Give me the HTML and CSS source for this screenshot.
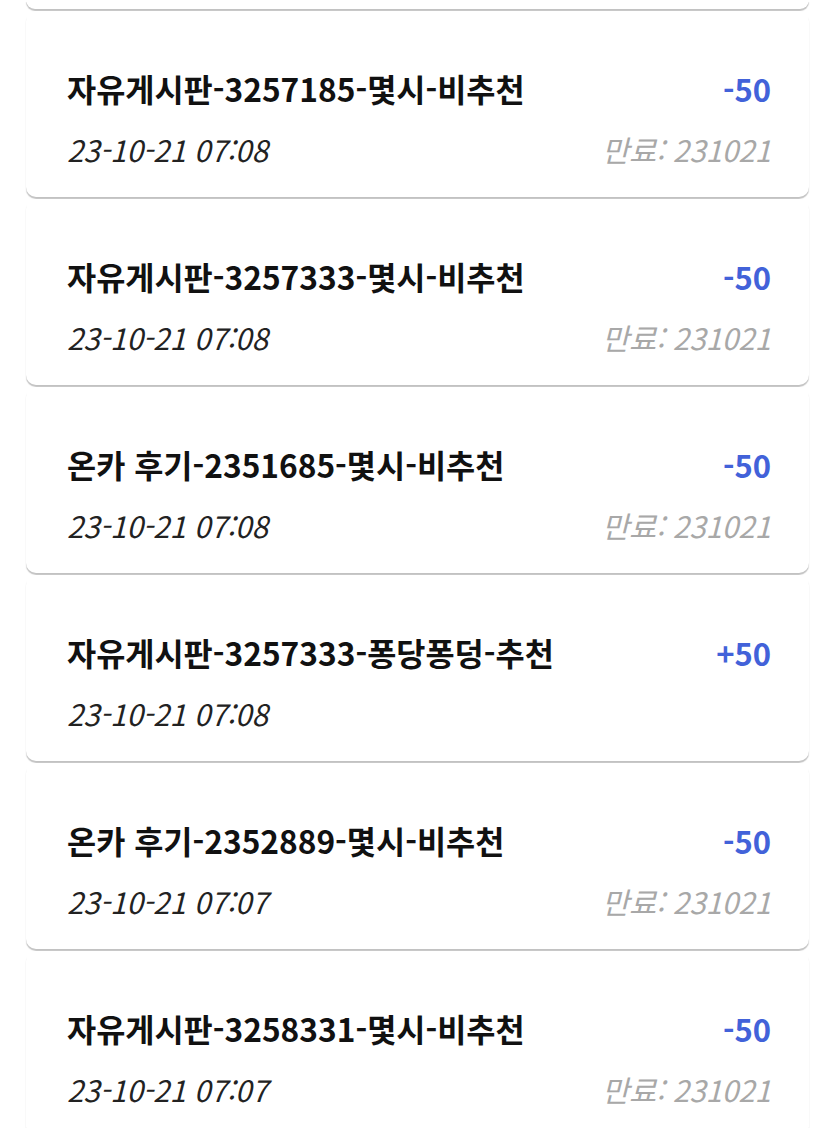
FILE: index.html
```html
<!DOCTYPE html>
<html lang="ko">
<head>
    <meta charset="UTF-8">
    <meta name="viewport" content="width=device-width, initial-scale=1.0">
    <title>포인트 내역</title>
    <link rel="stylesheet" href="styles.css">
</head>
<body>
<div class="list">
    <div class="card cut"></div>

    <div class="card">
        <div class="row">
            <span class="title">자유게시판-3257185-몇시-비추천</span>
            <span class="point">-50</span>
        </div>
        <div class="row">
            <span class="date">23-10-21 07:08</span>
            <span class="expire">만료: 231021</span>
        </div>
    </div>

    <div class="card">
        <div class="row">
            <span class="title">자유게시판-3257333-몇시-비추천</span>
            <span class="point">-50</span>
        </div>
        <div class="row">
            <span class="date">23-10-21 07:08</span>
            <span class="expire">만료: 231021</span>
        </div>
    </div>

    <div class="card">
        <div class="row">
            <span class="title">온카 후기-2351685-몇시-비추천</span>
            <span class="point">-50</span>
        </div>
        <div class="row">
            <span class="date">23-10-21 07:08</span>
            <span class="expire">만료: 231021</span>
        </div>
    </div>

    <div class="card">
        <div class="row">
            <span class="title">자유게시판-3257333-퐁당퐁덩-추천</span>
            <span class="point">+50</span>
        </div>
        <div class="row">
            <span class="date">23-10-21 07:08</span>
        </div>
    </div>

    <div class="card">
        <div class="row">
            <span class="title">온카 후기-2352889-몇시-비추천</span>
            <span class="point">-50</span>
        </div>
        <div class="row">
            <span class="date">23-10-21 07:07</span>
            <span class="expire">만료: 231021</span>
        </div>
    </div>

    <div class="card">
        <div class="row">
            <span class="title">자유게시판-3258331-몇시-비추천</span>
            <span class="point">-50</span>
        </div>
        <div class="row">
            <span class="date">23-10-21 07:07</span>
            <span class="expire">만료: 231021</span>
        </div>
    </div>
</div>
</body>
</html>
```

FILE: styles.css
```css
body {
    font-family: "Noto Sans CJK KR", "Noto Sans", sans-serif;
    background-color: #ffffff;
    margin: 0;
    padding: 0;
    color: #111111;
}
.list {
    padding: 0 26px;
    display: flex;
    flex-direction: column;
    gap: 2px;
}
.card {
    height: 186px;
    box-sizing: border-box;
    background-color: #ffffff;
    border-radius: 10px;
    box-shadow: 0 2px 1px rgba(0, 0, 0, 0.24);
    padding: 57px 38px 0 41px;
    display: flex;
    flex-direction: column;
    gap: 21px;
}
.card.cut {
    height: 9px;
    padding: 0;
    border-top-left-radius: 0;
    border-top-right-radius: 0;
}
.row {
    display: flex;
    justify-content: space-between;
    align-items: center;
    height: 40px;
}
.title {
    font-size: 31.7px;
    font-weight: bold;
    color: #111111;
}
.point {
    font-size: 31px;
    font-weight: bold;
    color: #4262d9;
}
.date {
    font-size: 29.5px;
    font-style: italic;
    color: #222222;
}
.expire {
    font-size: 29.5px;
    font-style: italic;
    color: #a8a8a8;
}
```
